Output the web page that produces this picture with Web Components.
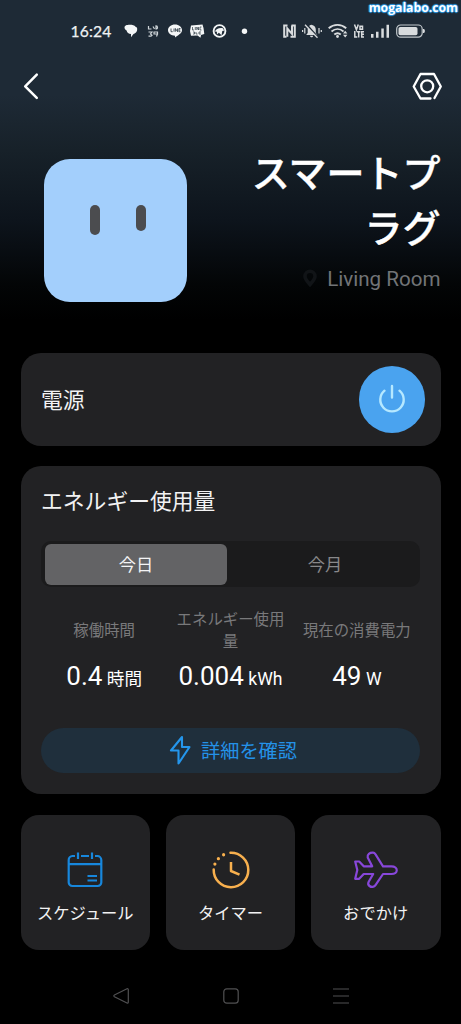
<!DOCTYPE html>
<html lang="ja">
<head>
<meta charset="utf-8">
<title>スマートプラグ</title>
<style>
html,body{margin:0;background:#000}
body{font-family:Roboto,"Noto Sans CJK JP",sans-serif;color:#f2f2f3}
</style>
</head>
<body>
<plug-app></plug-app>
<script>
const define=(name,css,html)=>customElements.define(name,class extends HTMLElement{
  constructor(){
    super();
    const t=document.createElement('template');
    t.innerHTML='<style>*{box-sizing:border-box}svg{display:block;overflow:visible}'+css+'</style>'+html;
    this.attachShadow({mode:'open'}).append(t.content.cloneNode(true));
  }
});

define('status-bar',`
:host{display:flex;box-sizing:border-box;height:62px;padding:0 35px 0 70.500px;align-items:center;justify-content:space-between;position:relative;color:#eef1f3}
.l,.r{display:flex;align-items:center}
.t{font-size:15.600px;font-weight:400;letter-spacing:.15px;line-height:20px;width:53.500px;font-family:Lato,sans-serif;-webkit-text-stroke:.25px #eef1f3}
.mark{position:absolute;right:3px;top:0;font:bold 12.200px/15px "Open Sans",sans-serif;color:#fff;text-shadow:0 0 1px #1d8fe0,1px 0 1px #2b9be8,-1px 0 1px #2b9be8,0 1px 1px #2b9be8,0 -1px 1px #2b9be8}
`,`
<div class="l"><span class="t">16:24</span>
<svg width="132" height="16" viewBox="0 0 132 16" fill="#f4f6f7">
<path d="M.5 4.500C.5 2.500 3 1.800 5.500 1.800c3 0 5 .6 6 2 1.900.6 1.900 2 1.600 3.400C12.600 9.500 11 10.600 9.500 10.900L7 14.200V11C4.600 10.700 3 9.700 2.600 7.500 1.500 6.800.5 6 .5 4.500Z"/>
<g fill="none" stroke="#cfd5d9" stroke-width="1.200"><path d="M24.500 3v3h3M29 3.500l1.500 2.500M32 2.800c2 0 2 3.200 0 3.200zM24.500 9h3.500l-1.500 2 1.500 1.200-1 1h-2.500M30 9v2h3.500V9h-4M33.500 11l-1 2.500"/></g>
<path d="M51 1.600c4 0 7 2.500 7 5.700 0 3.500-4.500 5-7 7.200v-1.700c-4-.2-7-2.600-7-5.500 0-3.200 3-5.700 7-5.700Z"/>
<path d="M47 5.500v3.200h1.700M50 5.500v3.200M51.400 8.700V5.500L53.500 8.700V5.500M56.500 5.500h-1.600v3.200h1.600M55 7h1.400" stroke="#26333e" fill="none" stroke-width=".8"/>
<path d="M67 2.500 78.500 1.500 79.500 5l.8 6-3.300 1-.5 2.700-3-2.200-6.500.2L66 8Z"/>
<path d="M68.500 4v3h1.500M71.300 4v3M72.800 7V4l1.700 3V4M77.500 4H76v3h1.500M69 9h1.500v2H69M72 9v2h1.500M75 9v2h2M75 9h2" stroke="#26333e" fill="none" stroke-width=".7"/>
<circle cx="95.500" cy="8" r="5.900" fill="none" stroke="#f4f6f7" stroke-width="1.900"/>
<path d="M91 8.500c1-2.600 3.500-3.800 7.500-3.400l1.800 2.400-2 .4-.8 4.300-2.600-2.400-2 1.700v-2.800z"/>
<circle cx="120.500" cy="8.300" r="2.700"/>
</svg></div>
<svg width="144" height="16" viewBox="0 0 144 16" fill="#d9dcde">
<g fill="none" stroke="#d9dcde" stroke-width="2"><path d="M5.500 2.500H2.200v11.300H4.500M9.500 2.500h3.300v11.300H8.500"/><path d="M5.300 13.800V5.500l4.700 5.300V2.500"/></g>
<path d="M29.500 1.800c3 .5 4.300 2.500 4.300 5v3.200l1.400 2H24.200l1.500-2V6.500c0-2.200 1.500-4.300 3.800-4.700zM28 12.800h3.200c-.5 2-2.700 2-3.200 0z"/>
<path d="m24 .8 11.500 13" stroke="#1e2a36" stroke-width="1.800"/><path d="m23 1.800 12.500 13" stroke="#d9dcde" stroke-width="1.300"/>
<path d="M20.600 7v2M22.800 5v5.500M37 5v5.500M39.300 7v2" stroke="#d9dcde" stroke-width="1.200"/>
<g fill="none" stroke="#d9dcde" stroke-width="1.900"><path d="M46.700 5.200c5-4.500 12.500-4.500 17.500 0M49.500 8.500c3.700-3.200 8.500-3.200 12 0M52.300 11.500c2-1.600 4.500-1.600 6.500 0"/></g>
<circle cx="55.500" cy="13.500" r="1.400"/><path d="m63.200 7.800 2.200 2.700H61zM63.200 14.400 61 11.700h4.400z"/>
<g fill="none" stroke="#d9dcde" stroke-width="1.500"><path d="m72.500 1.400 1.900 5.400 1.900-5.400M78 3.300h2.500v3H78zM72.800 8v5.900h2.500M74.800 8.700h3.600M76.700 8.700v5.800M82 8.700h-2.300v5.200H82M80 11.300h2"/></g>
<path d="M89 11h2.500v3.700H89zM94 8.800h2.500v5.900H94zM99.300 5.500h2.500v9.200h-2.500zM104.500 1.800h2.500v12.900h-2.500z"/>
<rect x="114.700" y="2" width="25.500" height="12.200" rx="4" fill="none" stroke="#c2c8cc" stroke-width="1.200"/><rect x="116.500" y="4" width="19" height="8.300" rx="1.800"/><path d="M141 6h1.200l.8 2-.8 2H141z"/>
</svg>
<span class="mark">mogalabo.com</span>`);

define('top-nav',`
:host{display:flex;height:50px;padding:0 19px 0 23px;align-items:center;justify-content:space-between;box-sizing:border-box}
svg{fill:none;stroke:#fff;stroke-linecap:round;stroke-linejoin:round}
`,`
<svg width="16" height="28" viewBox="0 0 16 28" stroke-width="2.500"><path d="M13.800 1.600 2.200 13.300 13.800 24.900"/></svg>
<svg width="30" height="28" viewBox="0 0 30 28" stroke-width="2.300"><path d="M18.500 25.500H8.500L1.700 13.500 8.500 1h13.500L28.800 13.500 22.500 25"/><circle cx="15.200" cy="13.300" r="6"/></svg>`);

define('device-hero',`
:host{display:flex;justify-content:space-between;padding:0 20.500px 0 43.500px;height:241px;box-sizing:border-box}
.plug{width:143.500px;height:143.500px;margin-top:46.500px;border-radius:26px;background:#a3cffc;display:flex;gap:35.500px;padding:46px 0 0 46px}
.plug i{width:10.500px;height:30.500px;border-radius:6px;background:#4b4c4f}.plug i+i{height:26px}
.info{width:200px;margin-top:32px;text-align:right}
h1{margin:0;font:500 38px/54.500px "Noto Sans CJK JP",sans-serif;color:#fff;-webkit-text-stroke:.4px #fff}
.room{display:flex;justify-content:flex-end;align-items:center;gap:10px;font-size:20.600px;line-height:26px;color:#727477;margin-top:13px}
`,`
<div class="plug"><i></i><i></i></div>
<div class="info"><h1>スマートプ<br>ラグ</h1>
<div class="room"><svg width="14" height="18" viewBox="0 0 14 18" fill="none" stroke="#111417" stroke-width="3.600"><path d="M7 14.500C4.500 11.500 2 9.500 2 6.300a5 5 0 0 1 10 0C12 9.500 9.500 11.500 7 14.500Z"/></svg><span>Living Room</span></div></div>`);

define('panel-card',`
:host{display:block;box-sizing:border-box;background:#222224;border-radius:20px;margin:0 20.500px}
`,`<slot></slot>`);

define('power-row',`
:host{display:flex;height:92.500px;box-sizing:border-box;align-items:center;justify-content:space-between;padding:0 15.500px 0 20.500px;font-size:21.800px}
span{margin-top:-2px}
.b{width:66.500px;height:66.500px;border-radius:50%;background:#4aa3ef;display:grid;place-items:center}
`,`<span>電源</span><div class="b"><svg width="28" height="28" viewBox="0 0 28 28" fill="none" stroke="#b5e8ff" stroke-width="2.400" stroke-linecap="round"><path d="M14 1v11.500M6.500 5.700a11.700 11.700 0 1 0 15 0"/></svg></div>`);

define('period-tabs',`
:host{display:flex;height:46px;box-sizing:border-box;padding:2.500px 4px 2.500px 4px;border-radius:10px;background:#1b1b1c;font-size:17.300px;color:#88888a}
span{flex:1;display:flex;align-items:center;justify-content:center;padding:0 0 1.500px 7px}
.on{flex:0 0 182px;background:#636365;color:#f4f4f5;border-radius:6px;padding-left:0}
`,`<span class="on">今日</span><span>今月</span>`);

define('stat-cell',`
:host{display:flex;flex-direction:column;align-items:center;flex:1 1 0;min-width:0}
.n{height:44px;width:112px;display:flex;align-items:center;justify-content:center;text-align:center;font-size:15.400px;line-height:22px;color:#79797b}
.v{margin-top:7px;height:32px;line-height:32px;white-space:nowrap;color:#fff;font-size:26px}
.u{font-size:17.600px;margin-left:4.500px}
`,`<div class="n"><slot name="name"></slot></div><div class="v"><slot></slot><span class="u"><slot name="unit"></slot></span></div>`);

define('detail-button',`
:host{display:flex;height:45.500px;border-radius:23px;background:#1f2f3c;align-items:center;justify-content:center;gap:10px;color:#2492e8;font-size:19.200px;box-sizing:border-box;padding-left:5px}
`,`<svg width="22" height="30" viewBox="0 0 22 30" fill="none" stroke="#2496ec" stroke-width="2.100" stroke-linejoin="round"><path d="M13 2 2 15.500h7.500V28.500L20.500 12H13Z"/></svg><span><slot></slot></span>`);

define('energy-panel',`
:host{display:block;height:328px;box-sizing:border-box;padding:19px 20.500px 0}
h2{margin:0;font-size:21.800px;line-height:34px;font-weight:400}
period-tabs{margin-top:22px}
.s{display:flex;margin-top:22px}
detail-button{margin-top:35.500px}
`,`<h2>エネルギー使用量</h2><period-tabs></period-tabs>
<div class="s"><stat-cell><span slot="name">稼働時間</span>0.4<span slot="unit">時間</span></stat-cell>
<stat-cell><span slot="name">エネルギー使用量</span>0.004<span slot="unit">kWh</span></stat-cell>
<stat-cell><span slot="name">現在の消費電力</span>49<span slot="unit">W</span></stat-cell></div>
<detail-button>詳細を確認</detail-button>`);

define('action-tile',`
:host{display:flex;flex-direction:column;align-items:center;flex:1 1 0;height:135.500px;box-sizing:border-box;background:#222224;border-radius:18px;padding-top:33px;font-size:16.300px}
.i{height:44px;display:grid;place-items:center}
.x{margin-top:9.500px;line-height:26px;white-space:nowrap}
`,`<div class="i"><slot name="icon"></slot></div><div class="x"><slot></slot></div>`);

define('action-row',`
:host{display:flex;gap:15.500px;padding:0 20.500px}
svg{fill:none;stroke-linecap:round;stroke-linejoin:round}
`,`
<action-tile><svg slot="icon" width="36" height="36" viewBox="0 0 36 36" stroke="#1787dc" stroke-width="2.200"><path stroke-linecap="butt" d="M8 4H5.500A4 4 0 0 0 1.700 8v22.500A3.600 3.600 0 0 0 5.300 34h25.400a3.600 3.600 0 0 0 3.600-3.500V8a4 4 0 0 0-4-4h-2.300M14 4h8M11 .5v6.500M25 .5v6.500M2 12.200h32M20.500 24h9.500M20.500 28.500h9.500"/></svg>スケジュール</action-tile>
<action-tile><svg slot="icon" width="38" height="38" viewBox="0 0 38 38" stroke="#f8b04e" stroke-width="2.500"><path d="M18.500 1.700A17.300 17.300 0 1 1 1.700 18.500"/><path stroke-linecap="butt" d="M19 11v9l8.500 3.700"/><path stroke-width="3.200" d="M2.900 13v.1M6.400 7.600v.1M11.600 3.700v.1"/></svg>タイマー</action-tile>
<action-tile><svg slot="icon" width="44" height="38" viewBox="0 0 44 38" stroke="#8847da" stroke-width="2.200"><path d="M1.200 10.500h4l4.500 4.800h8.500L13.700 6.500C13 3.500 15.800 1.500 19 1.700c1.500.1 2 1 2.700 2L29 15.300h8.500c7 0 7 7.700 0 7.700H29l-7.500 11.200c-1.300 2-4 2.300-6 .8-1.800-1.300-1.500-2.800-.8-4.200L19.200 23H9.700l-4.500 4.800h-4L3.300 19Z"/></svg>おでかけ</action-tile>`);

define('system-nav',`
:host{display:flex;justify-content:center;align-items:center;gap:94px;height:20px;margin-top:35.500px}
svg{fill:none;stroke:#505052;stroke-width:1.200;stroke-linejoin:round}
`,`
<svg width="16" height="16" viewBox="0 0 16 16"><path d="M14 .8 1.400 7q-1.200.8 0 1.800L14 15q1.300.4 1.300-1V2q0-1.600-1.300-1.200Z"/></svg>
<svg width="16" height="16" viewBox="0 0 16 16"><rect x=".8" y=".8" width="14.400" height="14.400" rx="3"/></svg>
<svg width="16" height="16" viewBox="0 0 16 16"><path d="M0 1h16M0 8h16M0 15h16"/></svg>`);

define('plug-app',`
:host{display:flex;flex-direction:column;width:461px;height:1024px;overflow:hidden;background:#000 linear-gradient(180deg,#1e2a36 0,#1e2a36 95px,#172129 150px,#0d141c 220px,#030506 285px,#000 320px) no-repeat}
.c{display:flex;flex-direction:column;gap:20.500px}
`,`<status-bar></status-bar><top-nav></top-nav><device-hero></device-hero>
<div class="c"><panel-card><power-row></power-row></panel-card><panel-card><energy-panel></energy-panel></panel-card><action-row></action-row></div>
<system-nav></system-nav>`);
</script>
</body>
</html>
